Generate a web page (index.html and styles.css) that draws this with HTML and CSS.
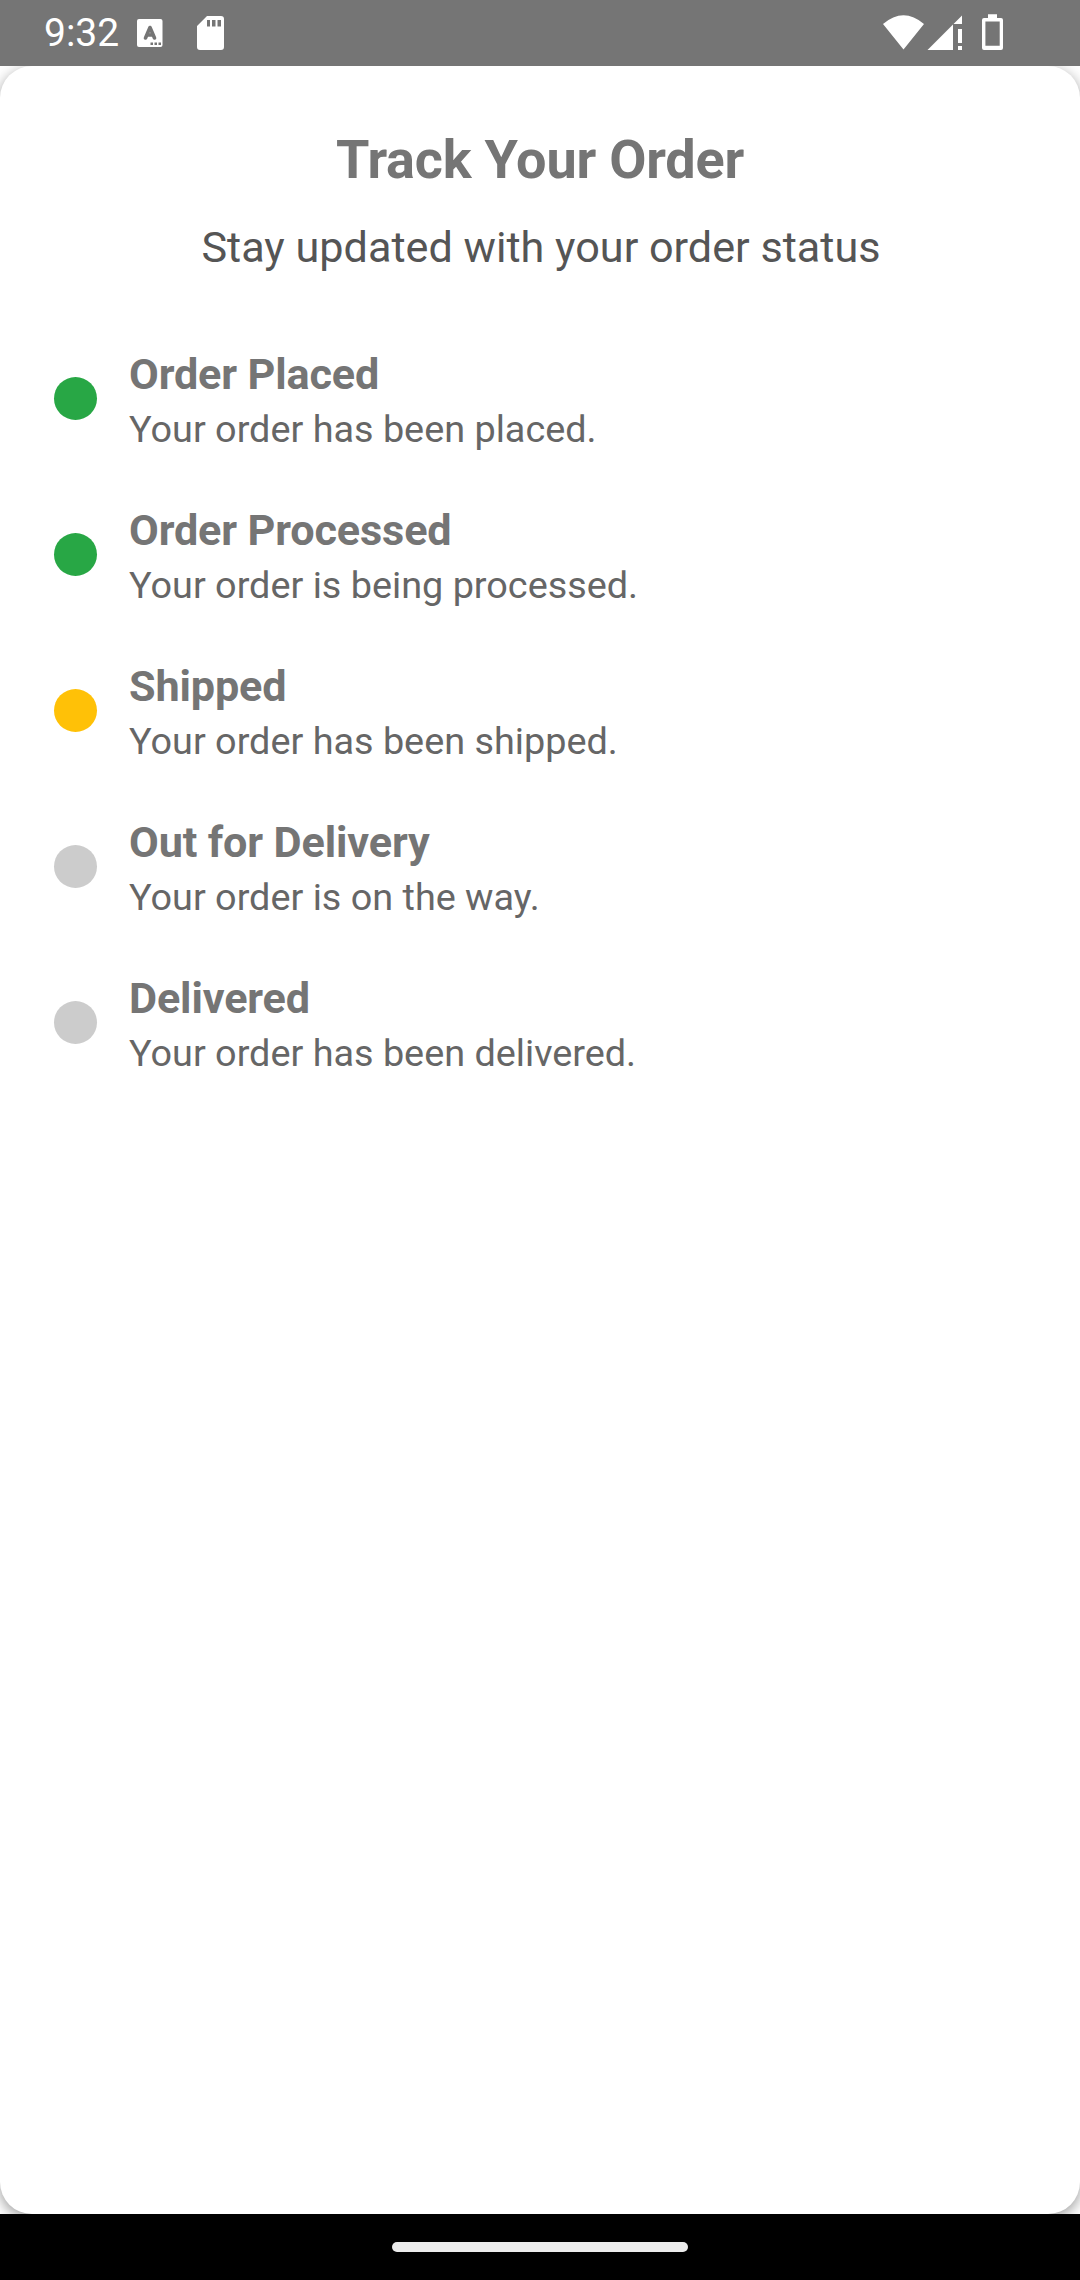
FILE: index.html
```html
<!DOCTYPE html>
<html lang="en"><head><meta charset="utf-8"><title>Track Your Order</title><link rel="stylesheet" href="styles.css"></head>
<body>
<header class="status-bar">
  <span class="clock">9:32</span>
  <svg class="icon-a" width="26" height="28" viewBox="0 0 26 28"><rect width="25.500" height="28" rx="2" fill="#fff"/><path d="M8.500 19L13 8.500L17.500 19M10 16H16" fill="none" stroke="#757575" stroke-width="3.600" stroke-linecap="round" stroke-linejoin="round"/><path d="M13.500 23.500h2.500v2.500h-2.500ZM17.500 23.500h2.500v2.500h-2.500ZM21.500 23.500h2.500v2.500h-2.500Z" fill="#757575"/></svg>
  <svg class="icon-sd" width="27" height="34" viewBox="0 0 27 34"><path fill="#fff" fill-rule="evenodd" d="M10 0H24Q27 0 27 3V31Q27 34 24 34H3Q0 34 0 31V10ZM10 4v6.500h3V4ZM15 4v6.500h3.500V4ZM20.500 4v6.500h3.500V4Z"/></svg>
  <span class="spacer"></span>
  <svg class="icon-system" width="130" height="66" viewBox="0 0 130 66"><path fill="#fff" d="M3 24Q23.500 6.500 44 24L23.500 49.500ZM47.500 50L73 24.500V50ZM73.500 24L82 15.500V24ZM78 29h4v14h-4ZM78 46h4v4h-4Z"/><path fill="#fff" fill-rule="evenodd" d="M108 14.200h9V18h4Q123 18 123 20V48Q123 50 121 50H104Q102 50 102 48V20Q102 18 104 18H108ZM105.400 21.500v24.300h14.300V21.500Z"/></svg>
</header>
<main class="screen"><section class="card">
  <h1 class="title">Track Your Order</h1><p class="subtitle">Stay updated with your order status</p>
  <ol class="steps">
    <li class="step"><span class="dot done"></span><div><h2 class="step-title">Order Placed</h2><p class="step-text">Your order has been placed.</p></div></li>
    <li class="step"><span class="dot done"></span><div><h2 class="step-title">Order Processed</h2><p class="step-text">Your order is being processed.</p></div></li>
    <li class="step"><span class="dot active"></span><div><h2 class="step-title">Shipped</h2><p class="step-text">Your order has been shipped.</p></div></li>
    <li class="step"><span class="dot"></span><div><h2 class="step-title">Out for Delivery</h2><p class="step-text">Your order is on the way.</p></div></li>
    <li class="step"><span class="dot"></span><div><h2 class="step-title">Delivered</h2><p class="step-text">Your order has been delivered.</p></div></li>
  </ol>
</section></main>
<footer class="nav-bar"><span class="handle"></span></footer>
</body></html>
```
FILE: styles.css
```css
* { box-sizing: border-box; margin: 0; padding: 0; }
body { height: 2280px; display: flex; flex-direction: column; font-family: Roboto, sans-serif; background: #fff; overflow: hidden; }
.status-bar { height: 66px; background: #757575; display: flex; align-items: center; padding: 0 70px 0 44px; color: #fff; }
.clock { width: 76px; font-size: 39px; line-height: 66px; }
.icon-a { margin-left: 16.500px; }
.icon-sd { margin-left: 34.500px; }
.spacer { flex: 1; }
.screen { flex: 1; background: #fff; overflow: hidden; }
.card { height: 100%; background: #fff; border-radius: 32px; padding: 54px 54px 0; box-shadow: 0 4px 14px rgba(0,0,0,.4); }
.title { font-size: 54px; line-height: 79px; letter-spacing: -.2px; text-align: center; color: #757575; }
.subtitle { margin-top: 19px; padding-left: 2px; font-size: 43.2px; line-height: 59px; text-align: center; color: #555; }
.steps { list-style: none; margin-top: 69px; display: flex; flex-direction: column; gap: 47px; }
.step { height: 109px; display: flex; align-items: flex-start; gap: 32px; }
.dot { width: 43px; height: 43px; margin-top: 31px; border-radius: 50%; background: #ccc; }
.done { background: #28a745; }
.active { background: #ffc107; }
.step-title { font-size: 43.2px; line-height: 57px; letter-spacing: -.14px; color: #757575; }
.step-text { font-size: 37.8px; line-height: 52px; color: #666; }
.nav-bar { height: 66px; background: #000; display: flex; justify-content: center; align-items: center; }
.handle { width: 296px; height: 10px; border-radius: 5px; background: #ececec; }
```
